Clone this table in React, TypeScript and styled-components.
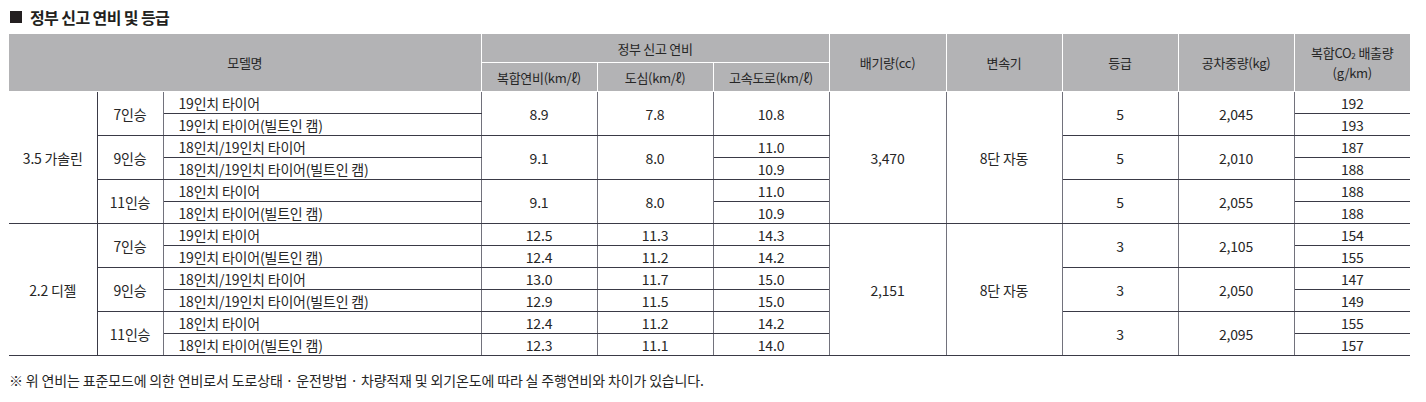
import { FC } from "react";
import styled, { createGlobalStyle } from "styled-components";

const GlobalStyle = createGlobalStyle`
  body {
    margin: 0;
    background: #fff;
    font-family: "Noto Sans CJK KR", "Noto Sans", sans-serif;
    color: #262626;
  }
`;

const Wrapper = styled.div`
  padding: 7px 0 0 9px;
  width: 1401px;
`;

const Title = styled.h2`
  display: flex;
  align-items: center;
  margin: 0 0 7px;
  height: 20px;
  font-size: 16px;
  font-weight: 700;
  letter-spacing: -0.6px;
  color: #231f20;
`;

const Square = styled.span`
  display: inline-block;
  width: 12px;
  height: 12px;
  margin: 0 8px 0 1px;
  background: #231f20;
`;

const Table = styled.table`
  width: 1401px;
  table-layout: fixed;
  border-collapse: collapse;
  font-size: 14px;
  letter-spacing: -0.2px;
`;

const Th = styled.th`
  height: 28px;
  padding: 0;
  background: #b3b3b5;
  font-size: 13px;
  font-weight: 400;
  letter-spacing: -0.3px;
  line-height: 17px;
  color: #262626;
  border: 1px solid #fff;
  border-top: none;

  &:first-child {
    border-left: none;
  }
  &:last-child {
    border-right: none;
  }

  sub {
    font-size: 8px;
    vertical-align: -1px;
    letter-spacing: 0;
  }
`;

const Td = styled.td<{ $left?: boolean }>`
  height: 21px;
  padding: ${(p) => (p.$left ? "0 0 0 15px" : "0")};
  text-align: ${(p) => (p.$left ? "left" : "center")};
  vertical-align: middle;
  line-height: 16px;
  white-space: nowrap;
  border-top: 1px solid #3a3a46;
  border-bottom: 1px solid #3a3a46;
  border-left: 1px solid #72727c;
  border-right: 1px solid #72727c;

  &:first-child {
    border-left: none;
  }
  &:last-child {
    border-right: none;
  }
`;

const EngineTd = styled(Td)`
  border-left: none;
  border-right-color: #3a3a46;
`;

const Note = styled.p`
  margin: 14px 0 0;
  line-height: 20px;
  font-size: 14px;
  letter-spacing: -0.15px;
  color: #262626;
`;

type Val = string | [string, string];

type Group = {
  seats: string;
  tires: [string, string];
  combined: Val;
  city: Val;
  highway: Val;
  grade: string;
  weight: string;
  co2: [string, string];
};

type Section = {
  engine: string;
  cc: string;
  gear: string;
  groups: Group[];
};

const tires19: [string, string] = ["19인치 타이어", "19인치 타이어(빌트인 캠)"];
const tires1819: [string, string] = ["18인치/19인치 타이어", "18인치/19인치 타이어(빌트인 캠)"];
const tires18: [string, string] = ["18인치 타이어", "18인치 타이어(빌트인 캠)"];

const sections: Section[] = [
  {
    engine: "3.5 가솔린",
    cc: "3,470",
    gear: "8단 자동",
    groups: [
      { seats: "7인승", tires: tires19, combined: "8.9", city: "7.8", highway: "10.8", grade: "5", weight: "2,045", co2: ["192", "193"] },
      { seats: "9인승", tires: tires1819, combined: "9.1", city: "8.0", highway: ["11.0", "10.9"], grade: "5", weight: "2,010", co2: ["187", "188"] },
      { seats: "11인승", tires: tires18, combined: "9.1", city: "8.0", highway: ["11.0", "10.9"], grade: "5", weight: "2,055", co2: ["188", "188"] },
    ],
  },
  {
    engine: "2.2 디젤",
    cc: "2,151",
    gear: "8단 자동",
    groups: [
      { seats: "7인승", tires: tires19, combined: ["12.5", "12.4"], city: ["11.3", "11.2"], highway: ["14.3", "14.2"], grade: "3", weight: "2,105", co2: ["154", "155"] },
      { seats: "9인승", tires: tires1819, combined: ["13.0", "12.9"], city: ["11.7", "11.5"], highway: ["15.0", "15.0"], grade: "3", weight: "2,050", co2: ["147", "149"] },
      { seats: "11인승", tires: tires18, combined: ["12.4", "12.3"], city: ["11.2", "11.1"], highway: ["14.2", "14.0"], grade: "3", weight: "2,095", co2: ["155", "157"] },
    ],
  },
];

const widths = [88, 66, 318, 116, 116, 116, 117, 116, 116, 116, 116];

// a value either fills both rows of a group or has one value per row
const ValCell: FC<{ v: Val; row: number }> = ({ v, row }) => {
  if (Array.isArray(v)) return <Td>{v[row]}</Td>;
  return row === 0 ? <Td rowSpan={2}>{v}</Td> : null;
};

const App: FC = () => (
  <Wrapper>
    <GlobalStyle />
    <Title>
      <Square />
      정부 신고 연비 및 등급
    </Title>
    <Table>
      <colgroup>
        {widths.map((w, i) => (
          <col key={i} style={{ width: w }} />
        ))}
      </colgroup>
      <thead>
        <tr>
          <Th colSpan={3} rowSpan={2}>모델명</Th>
          <Th colSpan={3}>정부 신고 연비</Th>
          <Th rowSpan={2}>배기량(cc)</Th>
          <Th rowSpan={2}>변속기</Th>
          <Th rowSpan={2}>등급</Th>
          <Th rowSpan={2}>공차중량(kg)</Th>
          <Th rowSpan={2}>
            복합CO<sub>2</sub> 배출량
            <br />
            (g/km)
          </Th>
        </tr>
        <tr>
          <Th>복합연비(km/ℓ)</Th>
          <Th>도심(km/ℓ)</Th>
          <Th>고속도로(km/ℓ)</Th>
        </tr>
      </thead>
      <tbody>
        {sections.map((s) =>
          s.groups.map((g, gi) =>
            [0, 1].map((row) => {
              const first = gi === 0 && row === 0;
              return (
                <tr key={`${s.engine}-${gi}-${row}`}>
                  {first && <EngineTd rowSpan={6}>{s.engine}</EngineTd>}
                  {row === 0 && <Td rowSpan={2}>{g.seats}</Td>}
                  <Td $left>{g.tires[row]}</Td>
                  <ValCell v={g.combined} row={row} />
                  <ValCell v={g.city} row={row} />
                  <ValCell v={g.highway} row={row} />
                  {first && <Td rowSpan={6}>{s.cc}</Td>}
                  {first && <Td rowSpan={6}>{s.gear}</Td>}
                  {row === 0 && <Td rowSpan={2}>{g.grade}</Td>}
                  {row === 0 && <Td rowSpan={2}>{g.weight}</Td>}
                  <Td>{g.co2[row]}</Td>
                </tr>
              );
            })
          )
        )}
      </tbody>
    </Table>
    <Note>
      ※ 위 연비는 표준모드에 의한 연비로서 도로상태 · 운전방법 · 차량적재 및 외기온도에 따라 실 주행연비와 차이가 있습니다.
    </Note>
  </Wrapper>
);

export default App;
